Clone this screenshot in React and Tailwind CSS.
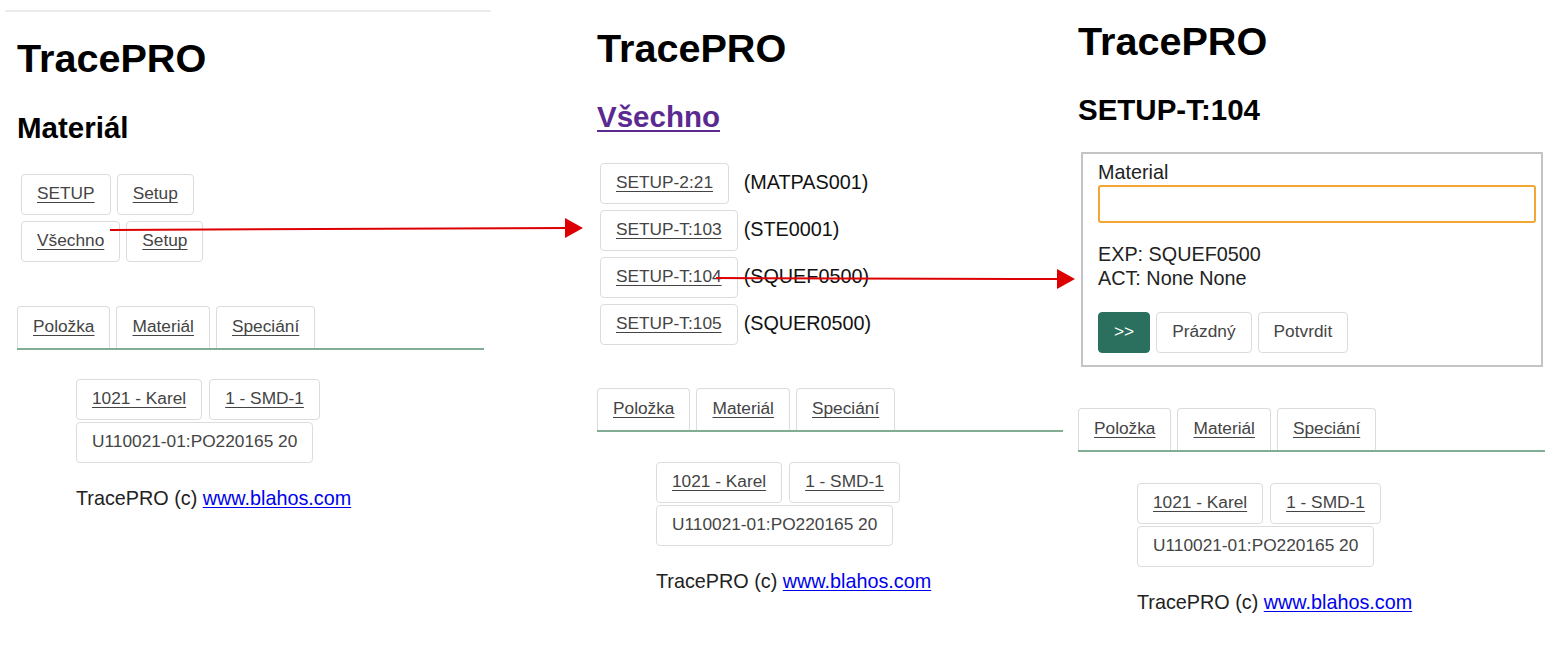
import React from 'react';

const Btn = ({ children, plain = false, className = '' }) => (
  <span
    className={`inline-flex items-center h-[41px] px-[15px] border border-[#dcdcdc] rounded-[4px] text-[17.3px] leading-none text-[#444] bg-white ${plain ? '' : 'underline underline-offset-[3px]'} ${className}`}
  >
    {children}
  </span>
);

const Tabs = () => (
  <div className="flex gap-[6px] border-b-2 border-[#80ad93]">
    {['Položka', 'Materiál', 'Speciání'].map((t) => (
      <a
        key={t}
        className="h-[42px] px-[15px] flex items-center border border-b-0 border-[#dcdcdc] rounded-t-[4px] text-[17.3px] leading-none text-[#444] underline underline-offset-[3px]"
      >
        {t}
      </a>
    ))}
  </div>
);

const Footer = ({ top }) => (
  <div className={`ml-[59px] ${top}`}>
    <div className="flex flex-col items-start gap-[2px]">
      <div className="flex gap-[7px]">
        <Btn>1021 - Karel</Btn>
        <Btn>1 - SMD-1</Btn>
      </div>
      <Btn plain>U110021-01:PO220165 20</Btn>
    </div>
    <p className="mt-[24px] text-[19.8px] leading-[23.5px] text-[#222]">
      TracePRO (c) <a className="text-[#0000ee] underline underline-offset-[2px]">www.blahos.com</a>
    </p>
  </div>
);

const H1 = ({ className = '' }) => (
  <h1 className={`text-[39.6px] leading-none font-bold text-black ${className}`}>TracePRO</h1>
);

export default function App() {
  const list = [
    ['SETUP-2:21', '(MATPAS001)'],
    ['SETUP-T:103', '(STE0001)'],
    ['SETUP-T:104', '(SQUEF0500)'],
    ['SETUP-T:105', '(SQUER0500)'],
  ];

  return (
    <div className="relative w-[1553px] h-[648px] overflow-hidden bg-white font-['Liberation_Sans',Arial,sans-serif] text-black">
      <div className="flex items-start">
        {/* Panel 1 - Materiál */}
        <div className="ml-[17px] w-[467px] shrink-0">
          <div className="mt-[10px] -ml-[12px] w-[486px] h-[2px] bg-[#ebebeb]" />
          <H1 className="mt-[27px]" />
          <h2 className="mt-[34px] text-[29.5px] leading-none font-bold">Materiál</h2>
          <div className="mt-[31.5px] ml-[4px] flex flex-col gap-[6px]">
            <div className="flex gap-[6px]">
              <Btn>SETUP</Btn>
              <Btn>Setup</Btn>
            </div>
            <div className="flex gap-[6px]">
              <Btn>Všechno</Btn>
              <Btn>Setup</Btn>
            </div>
          </div>
          <div className="mt-[44px]">
            <Tabs />
          </div>
          <Footer top="mt-[29px]" />
        </div>

        {/* Panel 2 - Všechno */}
        <div className="ml-[113px] w-[466px] shrink-0">
          <H1 className="mt-[29px]" />
          <h2 className="mt-[33px] text-[29.5px] leading-none font-bold">
            <a className="text-[#5b2a91] underline underline-offset-[3px]">Všechno</a>
          </h2>
          <div className="mt-[31.5px] ml-[3px] grid grid-cols-[auto_1fr] gap-x-[6px] gap-y-[6px] items-center">
            {list.map(([b, m]) => (
              <React.Fragment key={b}>
                <div>
                  <Btn>{b}</Btn>
                </div>
                <span className="text-[19.8px] leading-none text-[#111]">{m}</span>
              </React.Fragment>
            ))}
          </div>
          <div className="mt-[43px]">
            <Tabs />
          </div>
          <Footer top="mt-[30px]" />
        </div>

        {/* Panel 3 - SETUP-T:104 */}
        <div className="ml-[15px] w-[467px] shrink-0">
          <H1 className="mt-[22px]" />
          <h2 className="mt-[33px] text-[29.5px] leading-none font-bold">SETUP-T:104</h2>
          <div className="mt-[27.5px] ml-[3px] w-[462px] border-2 border-[#c4c4c4] pt-[7.5px] pl-[15px] pb-[12px]">
            <label className="block text-[19.8px] leading-[23.5px] text-[#222]">Material</label>
            <div className="w-[438px] h-[38px] border-2 border-[#f2a735] rounded-[3px]" />
            <div className="mt-[20.5px] text-[19.8px] leading-[23.5px] text-[#222]">
              <div>EXP: SQUEF0500</div>
              <div>ACT: None None</div>
            </div>
            <div className="mt-[21.5px] flex gap-[6px]">
              <Btn plain className="!bg-[#2b6f5e] !border-[#2b6f5e] !text-white">&gt;&gt;</Btn>
              <Btn plain>Prázdný</Btn>
              <Btn plain>Potvrdit</Btn>
            </div>
          </div>
          <div className="mt-[41px]">
            <Tabs />
          </div>
          <Footer top="mt-[31px]" />
        </div>
      </div>

      {/* red annotation arrows */}
      <svg className="absolute inset-0 pointer-events-none" width="1553" height="648">
        <line x1="110" y1="230" x2="567" y2="228" stroke="#dd0000" strokeWidth="2" />
        <polygon points="565,218 583,228 565,238" fill="#dd0000" />
        <line x1="716" y1="278" x2="1058" y2="279" stroke="#dd0000" strokeWidth="2" />
        <polygon points="1057,269 1075,279 1057,289" fill="#dd0000" />
      </svg>
    </div>
  );
}
